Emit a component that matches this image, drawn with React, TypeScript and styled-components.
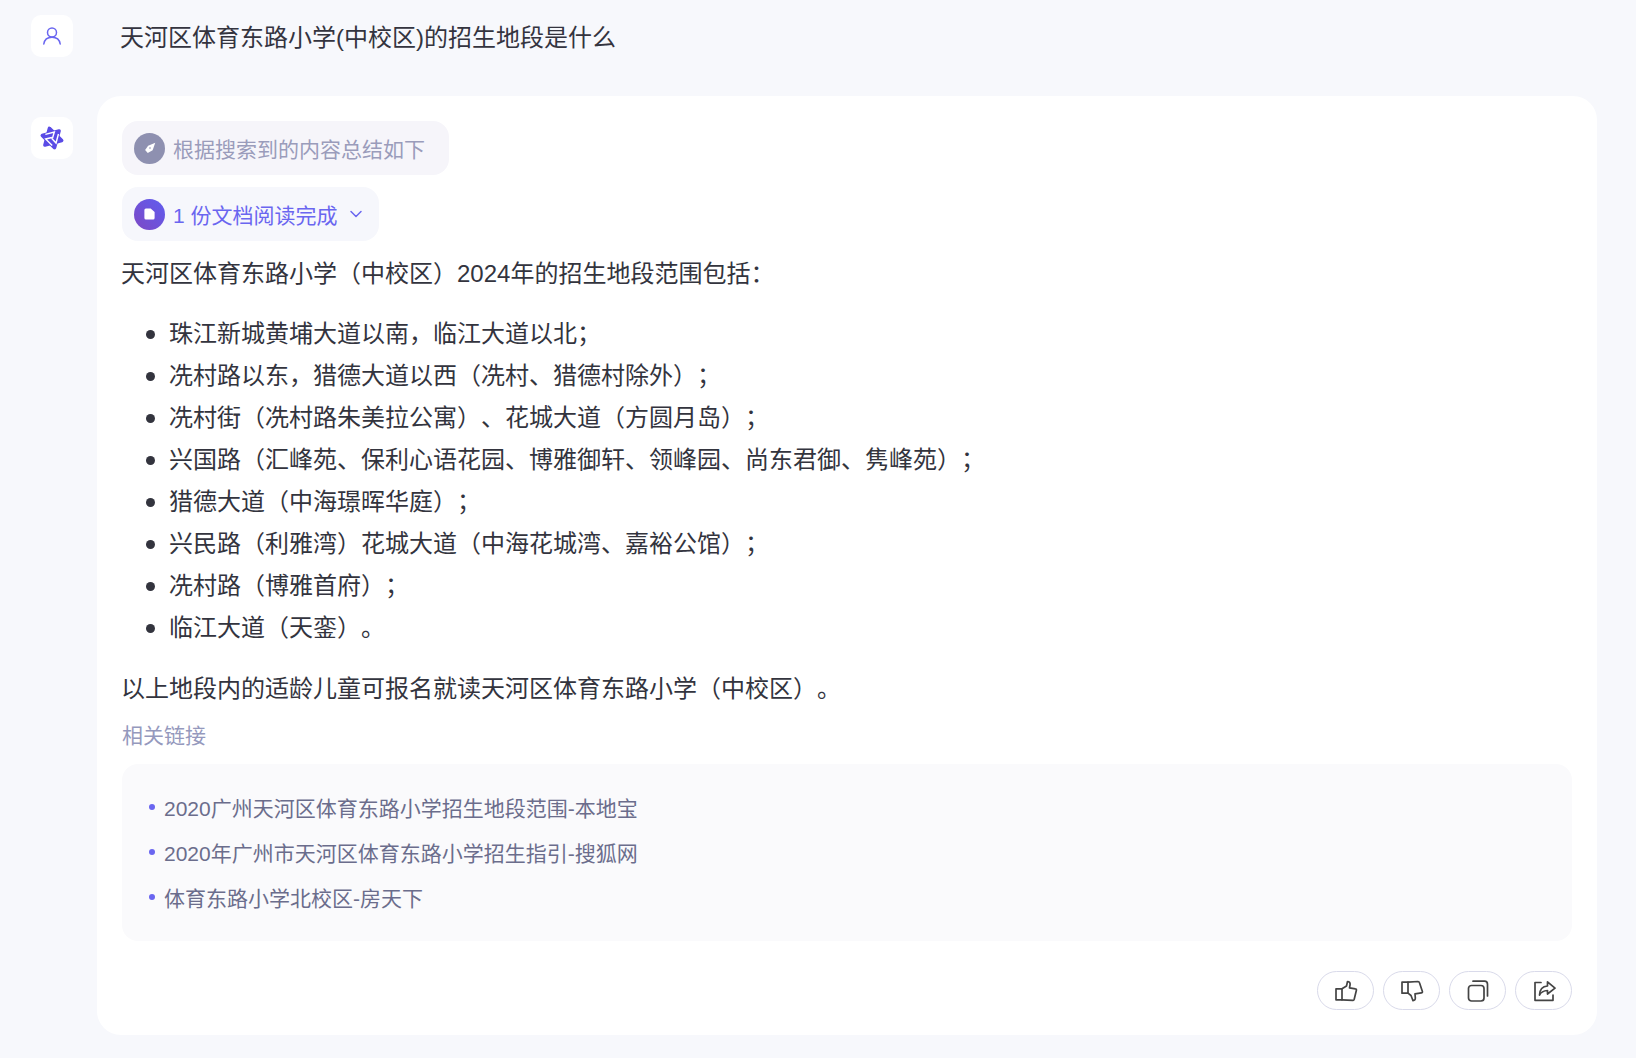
import React from 'react';
import styled, { createGlobalStyle } from 'styled-components';
import { ChevronDown } from 'lucide-react';

const GlobalStyle = createGlobalStyle`
  html, body {
    margin: 0;
    padding: 0;
    background: #f7f8fc;
    font-family: 'Liberation Sans', 'Noto Sans CJK SC', sans-serif;
    text-spacing-trim: space-all;
  }
`;

const districts = [
  '珠江新城黄埔大道以南，临江大道以北；',
  '冼村路以东，猎德大道以西（冼村、猎德村除外）；',
  '冼村街（冼村路朱美拉公寓）、花城大道（方圆月岛）；',
  '兴国路（汇峰苑、保利心语花园、博雅御轩、领峰园、尚东君御、隽峰苑）；',
  '猎德大道（中海璟晖华庭）；',
  '兴民路（利雅湾）花城大道（中海花城湾、嘉裕公馆）；',
  '冼村路（博雅首府）；',
  '临江大道（天銮）。',
];

const links = [
  '2020广州天河区体育东路小学招生地段范围-本地宝',
  '2020年广州市天河区体育东路小学招生指引-搜狐网',
  '体育东路小学北校区-房天下',
];

const UserIcon = () => (
  <svg width="20" height="20" viewBox="0 0 20 20" fill="none" stroke="#6a66f0" strokeWidth="1.5" strokeLinecap="round">
    <circle cx="10" cy="6.500" r="4.500" />
    <path d="M1.800 18c.6-4 3.800-6.700 8.200-6.700s7.600 2.700 8.200 6.700" />
  </svg>
);

const LogoIcon = () => (
  <svg width="28" height="28" viewBox="0 0 28 28">
    <g transform="rotate(-15 14 14)">
      <g fill="#5a4be6" stroke="#5a4be6" strokeWidth="3.500" strokeLinejoin="round">
        <polygon points="14,4 22.700,19 5.300,19" />
        <polygon points="14,24 5.300,9 22.700,9" />
      </g>
      {[0, 120, 240].map((angle) => (
        <path
          key={angle}
          transform={`rotate(${angle} 14 14)`}
          d="M8.500 8.800 H17.800 L14.400 14.300"
          fill="none"
          stroke="#fff"
          strokeWidth="1.400"
        />
      ))}
    </g>
  </svg>
);

const CompassIcon = () => (
  <svg width="12" height="12" viewBox="0 0 16 16">
    <path d="M15 1 L11.500 11 L5 14.500 L1.500 10.500 L5.500 5 Z" fill="#fff" />
    <circle cx="8" cy="8" r="1.300" fill="#b8b9d0" />
  </svg>
);

const DocIcon = () => (
  <svg width="11" height="12" viewBox="0 0 14 15">
    <path d="M2.500 0.500h6L13.500 5v7.500a2 2 0 0 1-2 2h-9a2 2 0 0 1-2-2v-10a2 2 0 0 1 2-2z" fill="#fff" />
  </svg>
);

const actionIcon = {
  width: 24,
  height: 24,
  viewBox: '0 0 24 24',
  fill: 'none',
  stroke: '#444',
  strokeWidth: 1.7,
  strokeLinejoin: 'round' as const,
  strokeLinecap: 'round' as const,
};

const ThumbUp = () => (
  <svg {...actionIcon}>
    <path d="M8 9.800H2v11h6z" />
    <path d="M8 9.800 12.500 7l1-4.500c1.800.1 2.800 1.200 2.600 3L15.500 8.800l5.900 1c.7.100 1.200.7 1 1.400l-2.200 9c-.2.700-.7 1.200-1.400 1.100L8 20.800" />
  </svg>
);

const ThumbDown = () => (
  <svg {...actionIcon}>
    <path d="M8 14.200H2V3.200h6z" />
    <path d="M8 14.200 11 16.500l2 5.200c1.800-.1 2.500-1.200 2.300-3l-.3-3.900 6.400-.9c.7-.1 1.200-.7 1-1.400L19.400 3.600c-.2-.7-.7-1.100-1.400-1.100L8 3.200" />
  </svg>
);

const CopyIcon = () => (
  <svg {...actionIcon}>
    <rect x="2.500" y="6.500" width="15.500" height="15.500" rx="3" />
    <path d="M7 2.200h11.500a3 3 0 0 1 3 3V17" />
  </svg>
);

const ShareIcon = () => (
  <svg {...actionIcon}>
    <path d="M9 3.500H3v17.800h18V16" />
    <path d="M15.500 2.800 23 9.200l-7.500 5.800v-3.500c-4 .2-6.500 1.500-8 4.500 .2-5 3-8.600 8-9z" />
  </svg>
);

const App = () => {
  return (
    <>
      <GlobalStyle />
      <Page>
        <QuestionRow>
          <Avatar>
            <UserIcon />
          </Avatar>
          <Question>天河区体育东路小学(中校区)的招生地段是什么</Question>
        </QuestionRow>
        <AnswerRow>
          <BotAvatar>
            <LogoIcon />
          </BotAvatar>
          <Card>
            <SearchChip>
              <CompassBadge>
                <CompassIcon />
              </CompassBadge>
              根据搜索到的内容总结如下
            </SearchChip>
            <DocChip>
              <DocBadge>
                <DocIcon />
              </DocBadge>
              1 份文档阅读完成
              <ChevronDown size={20} strokeWidth={1.8} />
            </DocChip>
            <Intro>天河区体育东路小学（中校区）2024年的招生地段范围包括：</Intro>
            <DistrictList>
              {districts.map((item) => (
                <District key={item}>{item}</District>
              ))}
            </DistrictList>
            <Outro>以上地段内的适龄儿童可报名就读天河区体育东路小学（中校区）。</Outro>
            <LinksTitle>相关链接</LinksTitle>
            <LinksBox>
              {links.map((link) => (
                <LinkRow key={link}>{link}</LinkRow>
              ))}
            </LinksBox>
            <Actions>
              <ActionButton><ThumbUp /></ActionButton>
              <ActionButton><ThumbDown /></ActionButton>
              <ActionButton><CopyIcon /></ActionButton>
              <ActionButton><ShareIcon /></ActionButton>
            </Actions>
          </Card>
        </AnswerRow>
      </Page>
    </>
  );
};

const Page = styled.main`
  width: 1636px;
  height: 1058px;
  box-sizing: border-box;
  padding: 15px 39px 23px 31px;
  overflow: hidden;
`;

const QuestionRow = styled.section`
  display: flex;
  align-items: flex-start;
  gap: 47px;
  margin-bottom: 39px;
`;

const Avatar = styled.div`
  width: 42px;
  height: 42px;
  flex: none;
  display: flex;
  align-items: center;
  justify-content: center;
  background: #fff;
  border-radius: 10px;
`;

const BotAvatar = styled(Avatar)`
  margin-top: 21px;
`;

const Question = styled.h1`
  margin: 2px 0 -2px;
  font-size: 24px;
  font-weight: 400;
  color: #34343f;
  line-height: 42px;
`;

const AnswerRow = styled.section`
  display: flex;
  align-items: flex-start;
  gap: 24px;
`;

const Card = styled.article`
  flex: 1;
  box-sizing: border-box;
  height: 939px;
  padding: 25px;
  background: #fff;
  border-radius: 24px;
`;

const Chip = styled.div`
  height: 54px;
  box-sizing: border-box;
  display: flex;
  align-items: center;
  border-radius: 16px;
  font-size: 21px;
`;

const SearchChip = styled(Chip)`
  width: 327px;
  padding-left: 12px;
  gap: 8px;
  background: #f6f5fa;
  color: #9a9cbb;
`;

const DocChip = styled(Chip)`
  width: 257px;
  margin-top: 12px;
  padding-left: 12px;
  gap: 8px;
  background: #f6f7fc;
  color: #6a66f0;
`;

const Badge = styled.span`
  width: 31px;
  height: 31px;
  flex: none;
  display: flex;
  align-items: center;
  justify-content: center;
  border-radius: 50%;
`;

const CompassBadge = styled(Badge)`
  background: #8e90b0;
`;

const DocBadge = styled(Badge)`
  background: linear-gradient(45deg, #7d48c4 0%, #5f5df0 100%);
`;

const Intro = styled.p`
  margin: 12px 0 0 -1px;
  font-size: 24px;
  line-height: 42px;
  color: #33343e;
`;

const DistrictList = styled.ul`
  margin: 18px 0 0;
  padding: 0 0 0 24px;
  list-style: none;
  font-size: 24px;
  line-height: 42px;
  color: #33343e;
`;

const District = styled.li`
  display: flex;
  align-items: center;
  gap: 14px;

  &::before {
    content: '';
    flex: none;
    width: 9px;
    height: 9px;
    border-radius: 50%;
    background: #33343e;
  }
`;

const Outro = styled(Intro)`
  margin-top: 19px;
`;

const LinksTitle = styled.h2`
  margin: 11px 0 13px;
  font-size: 21px;
  font-weight: 400;
  line-height: 30px;
  color: #9599bd;
`;

const LinksBox = styled.div`
  box-sizing: border-box;
  height: 177px;
  padding: 20px 27px;
  background: #fafafc;
  border-radius: 16px;
`;

const LinkRow = styled.div`
  display: flex;
  align-items: center;
  gap: 9px;
  height: 45px;
  font-size: 21px;
  color: #6b6d8c;

  &::before {
    content: '';
    width: 6px;
    height: 6px;
    border-radius: 50%;
    background: #6a66f0;
  }
`;

const Actions = styled.div`
  display: flex;
  justify-content: flex-end;
  gap: 9px;
  margin-top: 30px;
`;

const ActionButton = styled.button`
  width: 57px;
  height: 39px;
  display: flex;
  align-items: center;
  justify-content: center;
  padding: 0;
  background: #fff;
  border: 1px solid #d9daea;
  border-radius: 20px;
`;

export default App;
